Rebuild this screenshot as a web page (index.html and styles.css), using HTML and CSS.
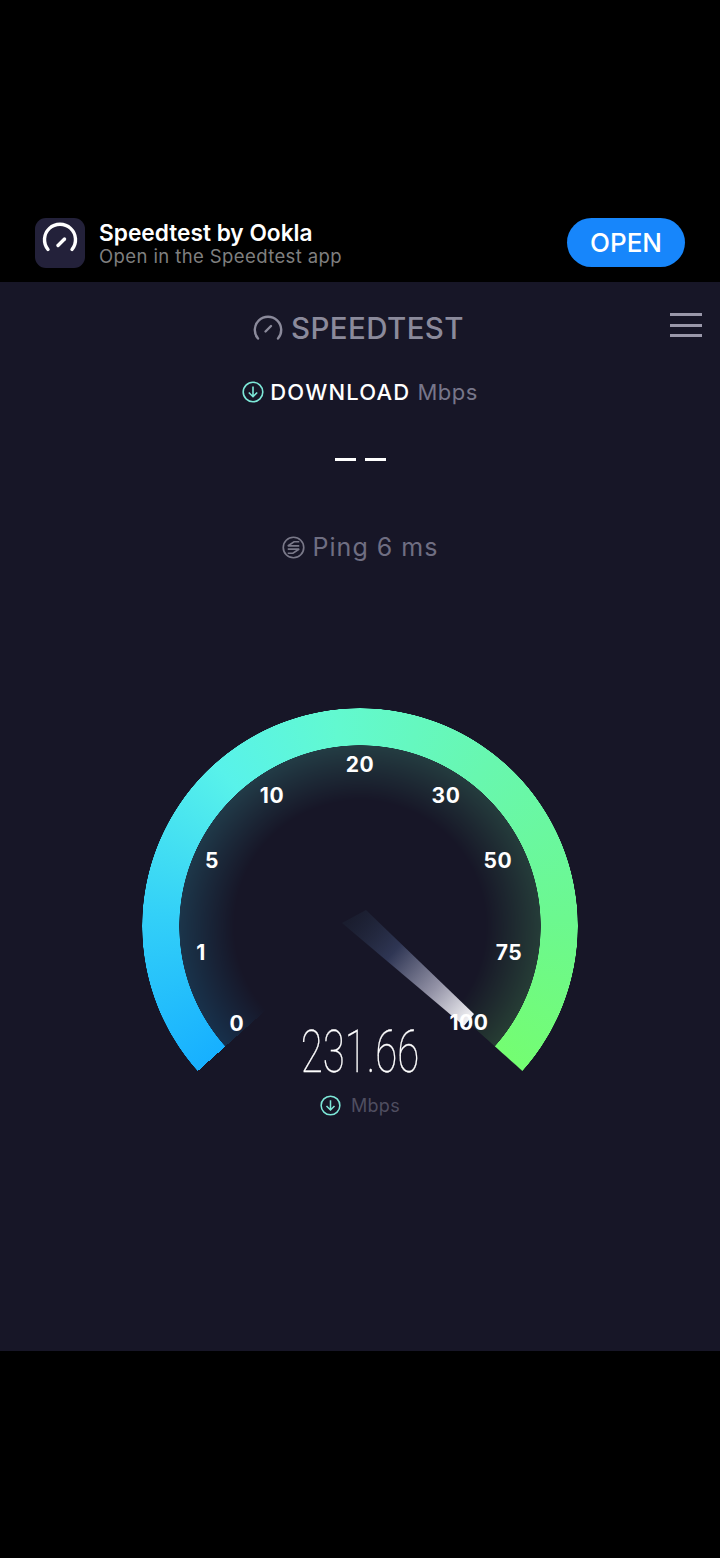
FILE: index.html
```html
<!DOCTYPE html>
<html lang="en">
<head>
    <meta charset="UTF-8">
    <meta name="viewport" content="width=device-width, initial-scale=1.0">
    <title>Speedtest by Ookla</title>
    <link rel="stylesheet" href="styles.css">
</head>
<body>

    <div class="app-banner">
        <div class="app-icon">
            <svg viewBox="0 0 50 50" width="50" height="50" fill="none" stroke="#fff" stroke-linecap="round">
                <path d="M13 31.500A15.500 15.500 0 1 1 37 31.500" stroke-width="3.400"/>
                <path d="M23 27.500L29.500 21" stroke-width="3.400"/>
            </svg>
        </div>
        <div class="app-text">
            <div class="app-name">Speedtest by Ookla</div>
            <div class="app-sub">Open in the Speedtest app</div>
        </div>
        <button type="button" class="open-button">OPEN</button>
    </div>

    <div class="main">
        <div class="top-bar">
            <div class="logo">
                <svg viewBox="0 0 30 26" width="30" height="26" fill="none" stroke="#8b8a9b" stroke-linecap="round" stroke-width="2.400">
                    <path d="M5 23.500A13.200 13.200 0 1 1 25 23.500"/>
                    <path d="M12.500 16.500L18 11"/>
                </svg>
                <span class="logo-text">SPEEDTEST</span>
            </div>
            <div class="menu">
                <span></span>
                <span></span>
                <span></span>
            </div>
        </div>

        <div class="download-row">
            <svg class="down-icon" viewBox="0 0 22 22" width="22" height="22" fill="none" stroke="#7de8d8" stroke-width="1.600">
                <circle cx="11" cy="11" r="9.800"/>
                <path d="M11 5.500V15.500M6.800 11.500L11 15.700L15.200 11.500"/>
            </svg>
            <span class="download-label">DOWNLOAD</span>
            <span class="download-unit">Mbps</span>
        </div>

        <div class="dashes">
            <span></span>
            <span></span>
        </div>

        <div class="ping-row">
            <svg viewBox="0 0 22 22" width="23" height="23" fill="none" stroke="#7a7989" stroke-width="1.600">
                <circle cx="11" cy="11" r="9.800"/>
                <path d="M5.500 9.500L11.500 5.500H16.500M16.500 9.500H5.500M5.500 12.500H16.500M5.500 16.500H10.500L16.500 12.500"/>
            </svg>
            <span>Ping 6 ms</span>
        </div>

        <div class="gauge">
            <div class="gauge-glow"></div>
            <div class="gauge-arc"></div>
            <svg class="needle" viewBox="0 0 436 436" width="436" height="436">
                <defs>
                    <linearGradient id="needleFill" gradientUnits="userSpaceOnUse" x1="210" y1="208" x2="328" y2="312">
                        <stop offset="0" stop-color="#1d2436" stop-opacity="0.500"/>
                        <stop offset="0.350" stop-color="#2f3654"/>
                        <stop offset="0.700" stop-color="#9392a6"/>
                        <stop offset="1" stop-color="#f4f4f6"/>
                    </linearGradient>
                </defs>
                <polygon points="200,215 224,202 332,306 322,318" fill="url(#needleFill)"/>
            </svg>
            <span class="tick tick-0">0</span>
            <span class="tick tick-1">1</span>
            <span class="tick tick-5">5</span>
            <span class="tick tick-10">10</span>
            <span class="tick tick-20">20</span>
            <span class="tick tick-30">30</span>
            <span class="tick tick-50">50</span>
            <span class="tick tick-75">75</span>
            <span class="tick tick-100">100</span>
            <div class="reading">231.66</div>
            <div class="reading-unit">
                <svg viewBox="0 0 22 22" width="21" height="21" fill="none" stroke="#7de8d8" stroke-width="1.600">
                    <circle cx="11" cy="11" r="9.800"/>
                    <path d="M11 5.500V15.500M6.800 11.500L11 15.700L15.200 11.500"/>
                </svg>
                <span>Mbps</span>
            </div>
        </div>
    </div>

</body>
</html>
```

FILE: styles.css
```css
* {
    margin: 0;
    padding: 0;
    box-sizing: border-box;
    font-family: 'Inter', 'Liberation Sans', sans-serif;
}

body {
    background: #000;
    height: 1558px;
    overflow: hidden;
}

.app-banner {
    height: 282px;
    padding: 218px 35px 0;
    display: flex;
    align-items: flex-start;
}

.app-icon {
    width: 50px;
    height: 50px;
    background: #23213a;
    border-radius: 11px;
}

.app-icon svg {
    display: block;
}

.app-text {
    flex: 1;
    margin-left: 14px;
    padding-top: 2px;
}

.app-name {
    font-size: 22.700px;
    line-height: 26px;
    font-weight: 600;
    color: #fff;
}

.app-sub {
    font-size: 18.500px;
    line-height: 21px;
    letter-spacing: 0.400px;
    color: #7f7f7f;
}

.open-button {
    width: 118px;
    height: 49px;
    background: #1786fb;
    color: #fff;
    border: none;
    border-radius: 25px;
    font-size: 26px;
    font-weight: 500;
}

.main {
    height: 1069px;
    background: #171627;
    padding-top: 31px;
    display: flex;
    flex-direction: column;
    align-items: center;
}

.top-bar {
    width: 100%;
    height: 30px;
    display: flex;
    justify-content: center;
    position: relative;
}

.logo {
    display: flex;
    align-items: center;
    gap: 8px;
    margin-right: 3px;
}

.logo-text {
    font-size: 29.500px;
    font-weight: 500;
    color: #8b8a9b;
    letter-spacing: 0.400px;
}

.menu {
    position: absolute;
    top: 0;
    right: 18px;
    width: 32px;
    display: flex;
    flex-direction: column;
    gap: 7.500px;
}

.menu span {
    height: 3px;
    background: #9a98aa;
}

.download-row {
    margin-top: 34px;
    height: 30px;
    display: flex;
    align-items: center;
    font-size: 22px;
}

.download-label {
    margin-left: 6px;
    color: #fff;
    font-weight: 500;
    letter-spacing: 1.200px;
}

.download-unit {
    margin-left: 7px;
    color: #77768a;
    font-weight: 400;
    letter-spacing: 0.500px;
}

.dashes {
    margin-top: 51px;
    display: flex;
    gap: 9px;
}

.dashes span {
    width: 21px;
    height: 3px;
    background: #fff;
}

.ping-row {
    margin-top: 68px;
    height: 36px;
    display: flex;
    align-items: center;
    gap: 8px;
    color: #6f6e82;
    font-size: 25px;
    letter-spacing: 1px;
}

.gauge {
    margin-top: 143px;
    width: 436px;
    height: 436px;
    position: relative;
}

.gauge-arc,
.gauge-glow {
    position: absolute;
    inset: 0;
    border-radius: 50%;
    background: conic-gradient(from 228.200deg,
        #17b0ff 0deg,
        #33d0f8 45deg,
        #58f2ea 90deg,
        #62f9d0 125deg,
        #68f7af 170deg,
        #6cf88f 220deg,
        #74fd72 263.400deg,
        transparent 263.700deg,
        transparent 360deg);
}

.gauge-arc {
    -webkit-mask: radial-gradient(circle at center, transparent 180.500px, #000 181px, #000 217.500px, transparent 218px);
    mask: radial-gradient(circle at center, transparent 180.500px, #000 181px, #000 217.500px, transparent 218px);
}

.gauge-glow {
    opacity: 0.170;
    -webkit-mask: radial-gradient(circle at center, transparent 125px, #000 181px, transparent 181.500px);
    mask: radial-gradient(circle at center, transparent 125px, #000 181px, transparent 181.500px);
}

.needle {
    position: absolute;
    top: 0;
    left: 0;
}

.tick {
    position: absolute;
    transform: translate(-50%, -50%);
    color: #fff;
    font-size: 21px;
    font-weight: 700;
    letter-spacing: 0.600px;
}

.tick-0 { left: 95px; top: 315px; }
.tick-1 { left: 59px; top: 244px; }
.tick-5 { left: 70px; top: 152px; }
.tick-10 { left: 130px; top: 87px; }
.tick-20 { left: 218px; top: 56px; }
.tick-30 { left: 304px; top: 87px; }
.tick-50 { left: 356px; top: 152px; }
.tick-75 { left: 367px; top: 244px; }
.tick-100 { left: 327px; top: 314px; }

.reading {
    position: absolute;
    left: 0;
    width: 100%;
    top: 308px;
    text-align: center;
    color: #fff;
    font-family: 'Roboto', sans-serif;
    font-weight: 100;
    font-size: 60px;
    line-height: 72px;
    -webkit-text-stroke: 0.300px #fff;
    transform: scaleX(0.670);
}

.reading-unit {
    position: absolute;
    top: 384px;
    left: 0;
    width: 100%;
    height: 26px;
    display: flex;
    justify-content: center;
    align-items: center;
    gap: 10px;
    color: #4f4e60;
    font-size: 18px;
    letter-spacing: 0.300px;
}
```
